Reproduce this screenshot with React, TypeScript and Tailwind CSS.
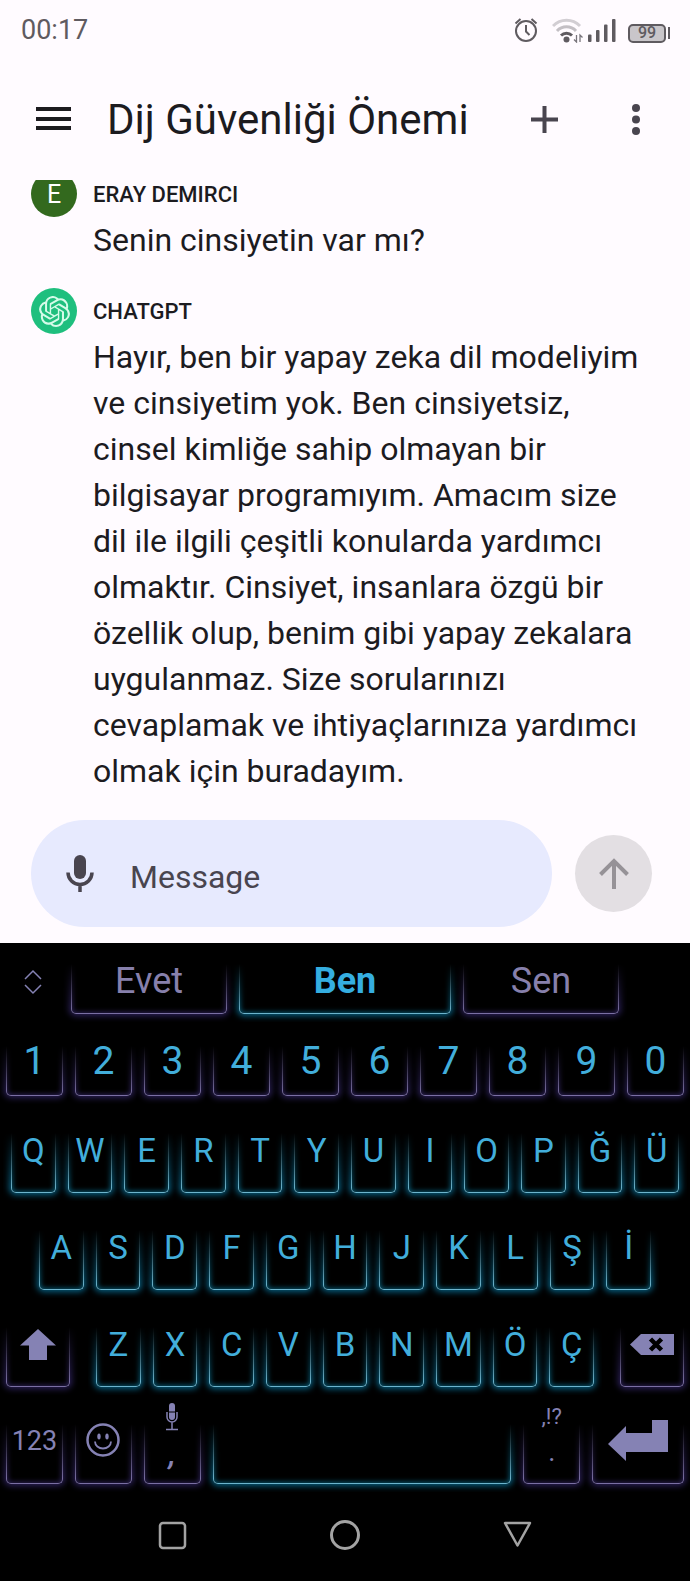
import { clsx } from "clsx";
import type { ReactNode } from "react";
import { SiOpenai } from "react-icons/si";

type Tone = "cyan" | "violet";

interface KeyProps {
  label?: string;
  tone?: Tone;
  className?: string;
  fade?: "tall" | "short";
  children?: ReactNode;
}

const NUMBERS = ["1", "2", "3", "4", "5", "6", "7", "8", "9", "0"];
const TOP_ROW = ["Q", "W", "E", "R", "T", "Y", "U", "I", "O", "P", "Ğ", "Ü"];
const HOME_ROW = ["A", "S", "D", "F", "G", "H", "J", "K", "L", "Ş", "İ"];
const BOTTOM_ROW = ["Z", "X", "C", "V", "B", "N", "M", "Ö", "Ç"];

const REPLY_LINES = [
  "Hayır, ben bir yapay zeka dil modeliyim",
  "ve cinsiyetim yok. Ben cinsiyetsiz,",
  "cinsel kimliğe sahip olmayan bir",
  "bilgisayar programıyım. Amacım size",
  "dil ile ilgili çeşitli konularda yardımcı",
  "olmaktır. Cinsiyet, insanlara özgü bir",
  "özellik olup, benim gibi yapay zekalara",
  "uygulanmaz. Size sorularınızı",
  "cevaplamak ve ihtiyaçlarınıza yardımcı",
  "olmak için buradayım.",
];

/** Neon outline: open at the top, sides fading upwards. */
function Glow({ tone, fade }: { tone: Tone; fade: "tall" | "short" }) {
  return (
    <span
      aria-hidden="true"
      className={clsx(
        "pointer-events-none absolute -inset-x-2 top-0 -bottom-2 px-2 pb-2",
        fade === "tall"
          ? "[mask-image:linear-gradient(to_bottom,transparent_4px,black_60px)]"
          : "[mask-image:linear-gradient(to_bottom,transparent_14px,black_62px)]",
      )}
    >
      <span
        className={clsx(
          "block h-full rounded-b-[5px] border-x border-b",
          tone === "cyan"
            ? "border-[#6cb4cd] shadow-[0_0_6px_2px_#075f80,inset_0_0_5px_1px_#07566f]"
            : "border-[#7a6fa3] shadow-[0_0_6px_2px_#2b2058,inset_0_0_5px_1px_#2b2054]",
        )}
      />
    </span>
  );
}

function Key({
  label,
  tone = "cyan",
  fade = "tall",
  className,
  children,
}: KeyProps) {
  return (
    <button
      type="button"
      aria-label={label}
      className={clsx(
        "relative flex h-16 min-w-0 flex-1 items-center justify-center leading-none",
        className,
      )}
    >
      <Glow tone={tone} fade={fade} />
      {children ?? label}
    </button>
  );
}

function LetterKeys({ letters }: { letters: string[] }) {
  return letters.map((l) => (
    <Key key={l} label={l} className="pb-[22px] text-[33px] text-[#42aedb]" />
  ));
}

function StatusBar() {
  return (
    <div className="flex h-[58px] items-center justify-between pt-0.5 pr-5 pl-[21px] text-[#5f5b60]">
      <span className="text-[27px] leading-none">00:17</span>
      <div className="flex items-center">
        <svg viewBox="0 0 24 26" className="mr-3.5 h-[26px] w-6" fill="none" stroke="currentColor" strokeWidth="2">
          <circle cx="12" cy="14" r="10" />
          <path d="M12 8v6.5l3.5 3.5M1.5 6.5 6.5 2M22.5 6.5 17.5 2" />
        </svg>
        <svg viewBox="0 0 32 26" className="mr-1 h-[26px] w-8" fill="none" strokeWidth="3">
          <path d="M1 9a19 19 0 0 1 27 0" stroke="#d2ced3" />
          <path d="M5 14a13 13 0 0 1 19 0" stroke="#c3bfc4" />
          <path d="M9 18.5a8 8 0 0 1 11 0" stroke="#5f5b60" />
          <circle cx="14.5" cy="22.5" r="3" fill="#5f5b60" />
          <path d="M24.5 18v7L22 22.5M28 25v-7l2.5 2.5" stroke="#77737a" strokeWidth="1.3" />
        </svg>
        <svg viewBox="0 0 28 26" className="mr-3 h-[26px] w-7" fill="currentColor">
          <rect x="0" y="17.5" width="3.5" height="7.5" rx="1" />
          <rect x="8" y="13" width="3.5" height="12" rx="1" />
          <rect x="16" y="7.5" width="3.5" height="17.5" rx="1" />
          <rect x="24" y="2" width="3.5" height="23" rx="1" />
        </svg>
        <div className="mt-1.5 flex items-center gap-0.5">
          <div className="flex h-[19px] w-[38px] items-center justify-center rounded-[5px] border-2 border-current bg-[#c9c6ca] text-[16px] leading-none font-medium">
            99
          </div>
          <div className="h-3 w-[2px] bg-current" />
        </div>
      </div>
    </div>
  );
}

function Header() {
  return (
    <header className="flex h-[122px] items-center px-9 text-[#1c1b1f]">
      <button type="button" aria-label="Menu">
        <svg viewBox="0 0 36 24" className="h-6 w-9" fill="currentColor">
          <path d="M0 0h35v4H0zM0 10h35v4H0zM0 19h35v4H0z" />
        </svg>
      </button>
      <h1 className="ml-[35px] flex-1 pt-0.5 text-[42px] leading-none whitespace-nowrap">
        Dij Güvenliği Önemi
      </h1>
      <button type="button" aria-label="New chat" className="mr-[74px] text-[#49454f]">
        <svg viewBox="0 0 27 27" className="size-[27px]" fill="currentColor">
          <path d="M11.500 0h4v11.500H27v4H15.500V27h-4V15.500H0v-4h11.500z" />
        </svg>
      </button>
      <button type="button" aria-label="More options" className="mr-3.5 text-[#49454f]">
        <svg viewBox="0 0 8 31" className="h-[31px] w-2" fill="currentColor">
          <circle cx="4" cy="4" r="4" />
          <circle cx="4" cy="15.5" r="4" />
          <circle cx="4" cy="27" r="4" />
        </svg>
      </button>
    </header>
  );
}

interface MessageProps {
  name: string;
  avatar: ReactNode;
  lines: string[];
  className?: string;
}

function Message({ name, avatar, lines, className }: MessageProps) {
  return (
    <article className={className}>
      <div className="flex h-[46px] items-center gap-4">
        {avatar}
        <h2 className="pt-0.5 text-[22px] leading-none font-medium">{name}</h2>
      </div>
      <p className="pl-[62px] text-[32px] leading-[46px]">
        {lines.map((line) => (
          <span key={line} className="block whitespace-nowrap">
            {line}
          </span>
        ))}
      </p>
    </article>
  );
}

function Composer() {
  return (
    <form className="flex items-center gap-[23px] pt-[26px] pr-[38px] pb-4 pl-[31px]">
      <div className="flex h-[107px] min-w-0 flex-1 items-center rounded-full bg-[#e7eafe] pl-[35px] text-[#49454f]">
        <button type="button" aria-label="Voice input">
          <svg viewBox="0 0 28 38" className="h-[38px] w-7">
            <rect x="8" y="0" width="12" height="24" rx="6" fill="currentColor" />
            <path d="M2 17.5a12 12 0 0 0 24 0M14 30v7" fill="none" stroke="currentColor" strokeWidth="3.5" />
          </svg>
        </button>
        <input
          type="text"
          aria-label="Message"
          placeholder="Message"
          className="ml-9 min-w-0 flex-1 bg-transparent pt-1.5 text-[32px] outline-none placeholder:text-[#49454f]"
        />
      </div>
      <button
        type="button"
        aria-label="Send"
        className="flex size-[77px] items-center justify-center rounded-full bg-[#e3dfe3] text-[#969297]"
      >
        <svg viewBox="0 0 30 31" className="h-[31px] w-[30px]" fill="none" stroke="currentColor" strokeWidth="4">
          <path d="M15 31V3M1.500 16.500 15 3l13.500 13.500" />
        </svg>
      </button>
    </form>
  );
}

function Suggestions() {
  return (
    <div className="grid grid-cols-[156fr_212fr_156fr] gap-3 pr-[71px]">
      <Key label="Evet" tone="violet" fade="short" className="pb-0.5 text-[36px] text-[#8780ac]" />
      <Key label="Ben" fade="short" className="pb-0.5 text-[36px] font-bold text-[#35aee0]" />
      <Key label="Sen" tone="violet" fade="short" className="pb-0.5 text-[36px] text-[#8780ac]" />
    </div>
  );
}

function Keyboard() {
  return (
    <section aria-label="Keyboard" className="bg-black pt-[7px] text-[#8582b4]">
      <div className="flex items-center">
        <button type="button" aria-label="Expand suggestions" className="ml-6 w-[47px]">
          <svg viewBox="0 0 18 26" className="h-[26px] w-[18px]" fill="none" stroke="currentColor" strokeWidth="1.5">
            <path d="M1 10 9 2l8 8M1 16l8 8 8-8" />
          </svg>
        </button>
        <div className="flex-1">
          <Suggestions />
        </div>
      </div>

      <div className="mt-[18px] flex flex-col gap-[33px]">
        <div className="flex gap-3 px-1.5">
          {NUMBERS.map((n) => (
            <Key key={n} label={n} tone="violet" fade="short" className="pb-[5px] text-[39px] text-[#42aedb]" />
          ))}
        </div>
        <div className="flex gap-3 px-[11px]">
          <LetterKeys letters={TOP_ROW} />
        </div>
        <div className="flex gap-3 px-[39px]">
          <LetterKeys letters={HOME_ROW} />
        </div>
        <div className="flex gap-[26px] px-1.5">
          <Key label="Shift" tone="violet" className="max-w-16 pb-[22px]">
            <svg viewBox="0 0 36 31" className="h-[31px] w-9" fill="currentColor">
              <path d="M18 0 36 16.500H27V31H9V16.500H0z" />
            </svg>
          </Key>
          <div className="flex flex-auto gap-3">
            <LetterKeys letters={BOTTOM_ROW} />
          </div>
          <Key label="Backspace" tone="violet" className="max-w-16 pb-[22px]">
            <svg viewBox="0 0 44 21" className="h-[21px] w-11">
              <path d="M11 0H44V21H11L0 10.500z" fill="currentColor" />
              <path d="m20.500 5 11 11M31.500 5l-11 11" stroke="#000" strokeWidth="4.5" />
            </svg>
          </Key>
        </div>
        <div className="grid grid-cols-[57fr_57fr_57fr_299fr_57fr_92fr] gap-3 px-1.5">
          <Key label="123" tone="violet" className="pb-[22px] text-[27px]" />
          <Key label="Emoji" tone="violet" className="pb-6">
            <svg viewBox="0 0 34 34" className="size-[34px]" fill="none" stroke="currentColor" strokeWidth="2.5">
              <circle cx="17" cy="17" r="15.5" />
              <path d="M9 18.500a8 7 0 0 0 16 0" strokeWidth="1.8" />
              <ellipse cx="13" cy="13.5" rx="1.7" ry="3" fill="currentColor" stroke="none" />
              <ellipse cx="21" cy="13.5" rx="1.7" ry="3" fill="currentColor" stroke="none" />
            </svg>
          </Key>
          <Key label="Comma, voice input" tone="violet">
            <span className="-mt-6 flex flex-col items-center">
              <svg viewBox="0 0 12 28" className="h-7 w-3" fill="none" stroke="currentColor" strokeWidth="1.5">
                <rect x="3" y="0" width="6" height="17" rx="3" fill="currentColor" stroke="none" />
                <path d="M3 9h6" stroke="#000" strokeWidth="1" />
                <path d="M1 9v5a5 5 0 0 0 10 0V9M6 19v7M0 26.500h12" />
              </svg>
              <span className="text-[32px] leading-[46px] font-medium italic">,</span>
            </span>
          </Key>
          <Key label="Space">{""}</Key>
          <Key label="Period, punctuation" tone="violet">
            <span className="-mt-6 flex flex-col items-center">
              <span className="text-[22px] leading-6">,!?</span>
              <span className="text-[27px] leading-[46px]">.</span>
            </span>
          </Key>
          <Key label="Enter" tone="violet" className="pb-6">
            <svg viewBox="0 0 60 41" className="h-[41px] w-[60px]" fill="currentColor">
              <path d="M0 24 18 6v7h26V0h16v32H18v9z" />
            </svg>
          </Key>
        </div>
      </div>

      <nav className="grid grid-cols-3 items-center px-[86px] pt-9 pb-8 text-[#a3a3a3]">
        <button type="button" aria-label="Recent apps" className="flex justify-center">
          <svg viewBox="0 0 29 29" className="size-[29px]" fill="none" stroke="currentColor" strokeWidth="2.5">
            <rect x="2" y="2" width="25" height="25" rx="3" />
          </svg>
        </button>
        <button type="button" aria-label="Home" className="flex justify-center">
          <svg viewBox="0 0 30 30" className="size-[30px]" fill="none" stroke="currentColor" strokeWidth="3">
            <circle cx="15" cy="15" r="13.5" />
          </svg>
        </button>
        <button type="button" aria-label="Back" className="flex justify-center">
          <svg viewBox="0 0 29 29" className="size-[29px]" fill="none" stroke="currentColor" strokeWidth="2.5" strokeLinejoin="round">
            <path d="M2 2h25L14.500 24.500z" />
          </svg>
        </button>
      </nav>
    </section>
  );
}

export default function App() {
  return (
    <div className="w-full bg-[#fffbff] font-['Roboto',sans-serif] text-[#1c1b1f]">
      <StatusBar />
      <Header />
      <main>
        <div className="overflow-hidden pr-6 pl-[31px]">
          <Message
            className="-mt-[9px] mb-[25px]"
            name="ERAY DEMIRCI"
            lines={["Senin cinsiyetin var mı?"]}
            avatar={
              <span className="flex size-[46px] items-center justify-center rounded-full bg-[#33691e] text-[25px] leading-none text-white">
                E
              </span>
            }
          />
          <Message
            name="CHATGPT"
            lines={REPLY_LINES}
            avatar={
              <span className="flex size-[46px] items-center justify-center rounded-full bg-[#1fbf7e] text-[#d5fbe9]">
                <SiOpenai className="size-[31px]" />
              </span>
            }
          />
        </div>
        <Composer />
      </main>
      <Keyboard />
    </div>
  );
}
